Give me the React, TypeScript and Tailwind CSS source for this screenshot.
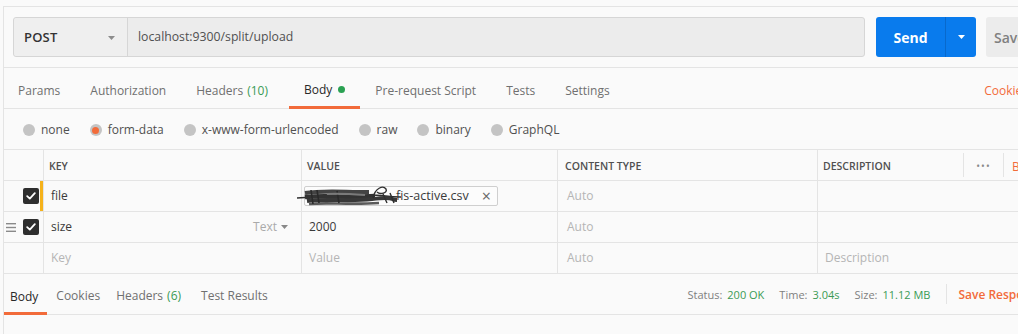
import React from "react";

const Caret = ({ className }: { className?: string }) => (
  <svg width="7" height="4" viewBox="0 0 7 4" className={className}>
    <path d="M0 0h7L3.5 4z" fill="currentColor" />
  </svg>
);

const Check = () => (
  <div className="w-[16px] h-[16px] rounded-[2px] bg-[#2e2e2e] flex items-center justify-center shrink-0">
    <svg width="10" height="8" viewBox="0 0 10 8">
      <path d="M1.2 4.2l2.6 2.4L8.8 1.2" stroke="white" strokeWidth="1.8" fill="none" strokeLinecap="round" strokeLinejoin="round" />
    </svg>
  </div>
);

const Hamburger = () => (
  <svg width="10" height="9" viewBox="0 0 10 9">
    <rect x="0" y="0" width="10" height="1.4" fill="#8a8a8a" />
    <rect x="0" y="3.8" width="10" height="1.4" fill="#8a8a8a" />
    <rect x="0" y="7.6" width="10" height="1.4" fill="#8a8a8a" />
  </svg>
);

const Radio = ({ on, label }: { on?: boolean; label: string }) => (
  <div className="flex items-center">
    <div className="w-[12px] h-[12px] rounded-full bg-[#c4c4c4] flex items-center justify-center">
      {on && <div className="w-[7px] h-[7px] rounded-full bg-[#f26b3a]" />}
    </div>
    <span className="ml-[6px] text-[12px] text-[#505050]">{label}</span>
  </div>
);

const Scribble = () => (
  <svg width="104" height="24" viewBox="0 0 104 24" className="shrink-0 -ml-[8px]">
    <path d="M0 14 C20 12 40 15 60 12 S85 13 104 13" stroke="#2f2f2f" strokeWidth="1.6" fill="none" />
    <path d="M8 9 C25 6 45 8 72 8" stroke="#444" strokeWidth="4" fill="none" />
    <path d="M8 13 C30 11 50 14 78 12" stroke="#333" strokeWidth="4.5" fill="none" />
    <path d="M10 17 C30 14 50 18 75 15 S92 16 100 16" stroke="#383838" strokeWidth="4" fill="none" />
    <path d="M12 20 C30 18 50 21 82 19" stroke="#5a5a5a" strokeWidth="2.6" fill="none" />
    <path d="M14 6 L16 20 M20 6 L22 19 M40 7 L42 19" stroke="#2a2a2a" strokeWidth="1.6" fill="none" />
    <path d="M76 14 C78 4 86 1 89 5 C91 9 83 11 80 8 M86 10 L90 19 M93 9 L97 19" stroke="#2f2f2f" strokeWidth="1.4" fill="none" />
    <path d="M30 10 C40 9 55 10 68 11" stroke="#7a7a7a" strokeWidth="2" fill="none" />
  </svg>
);

export default function App() {
  return (
    <div className="w-[1018px] h-[334px] overflow-hidden bg-[#fafafa] font-['Open_Sans',sans-serif]">
      <div className="w-[1066px] h-[334px] ml-[3px] mt-[6px] border-l border-t border-[#e4e4e4] flex flex-col">
        {/* Request bar */}
        <div className="flex items-stretch pl-[9px] pr-[13px] pt-[10px] pb-[10px] border-b border-[#e4e4e4]">
          <div className="flex flex-1 h-[40px] border border-[#d6d6d6] rounded-[3px] bg-[#ececec]">
            <div className="w-[114px] flex items-center justify-between pl-[10px] pr-[12px] pt-[1px] border-r border-[#d6d6d6] bg-[#efefef] rounded-l-[3px]">
              <span className="text-[13px] text-[#333] font-semibold tracking-[0.2px]">POST</span>
              <Caret className="text-[#8c8c8c]" />
            </div>
            <div className="flex-1 flex items-center pl-[10px] pt-[1px] text-[12.25px] text-[#505050]">localhost:9300/split/upload</div>
          </div>
          <div className="ml-[11px] w-[100px] h-[40px] flex rounded-[3px] bg-[#097bed] text-white">
            <div className="w-[69px] flex items-center justify-center pt-[1px] text-[14px] font-bold">Send</div>
            <div className="flex-1 flex items-center justify-center border-l border-[#0869cc]">
              <Caret className="text-white" />
            </div>
          </div>
          <div className="ml-[10px] w-[70px] h-[40px] flex items-center pl-[8px] pt-[1px] rounded-[3px] bg-[#ececec] text-[14px] font-semibold text-[#808080]">
            Save
          </div>
        </div>

        {/* Tabs */}
        <div className="flex items-stretch h-[41px] border-b border-[#e4e4e4] text-[12px]">
          <div className="pl-[14px] pr-[15px] flex items-center pt-[5px] text-[#707070]">Params</div>
          <div className="px-[15px] flex items-center pt-[5px] text-[#707070]">Authorization</div>
          <div className="px-[15px] flex items-center pt-[5px] text-[#707070]">
            Headers<span className="ml-[4px] text-[#3a9a55]">(10)</span>
          </div>
          <div className="px-[15px] flex items-center pt-[5px] text-[#282828] border-b-[3px] border-[#f26b3a] -mb-[1px] ml-[6px]">
            Body<span className="ml-[6px] w-[7px] h-[7px] rounded-full bg-[#2aa152] inline-block" />
          </div>
          <div className="pl-[15px] pr-[15px] flex items-center pt-[5px] text-[#707070]">Pre-request Script</div>
          <div className="px-[15px] flex items-center pt-[5px] text-[#707070]">Tests</div>
          <div className="px-[15px] flex items-center pt-[5px] text-[#707070]">Settings</div>
          <div className="ml-auto mr-[41px] flex items-center pt-[5px] text-[#f26b3a]">Cookies</div>
        </div>

        {/* Body type radios */}
        <div className="h-[40px] flex items-center pl-[19px] pt-[2px] gap-[20px]">
          <Radio label="none" />
          <Radio on label="form-data" />
          <Radio label="x-www-form-urlencoded" />
          <Radio label="raw" />
          <Radio label="binary" />
          <Radio label="GraphQL" />
        </div>

        {/* Table */}
        <div className="border-t border-[#e4e4e4] text-[12px]">
          {/* header */}
          <div className="flex h-[31px] border-b border-[#e4e4e4]">
            <div className="w-[40px] border-r border-[#e4e4e4]" />
            <div className="w-[258px] border-r border-[#e4e4e4] flex items-center pl-[5px] pt-[3px] text-[10.5px] font-semibold text-[#505050]">KEY</div>
            <div className="w-[256px] border-r border-[#e4e4e4] flex items-center pl-[5px] pt-[3px] text-[10.5px] font-semibold text-[#505050]">VALUE</div>
            <div className="w-[260px] border-r border-[#e4e4e4] flex items-center pl-[7px] pt-[3px] text-[10.5px] font-semibold text-[#505050]">CONTENT TYPE</div>
            <div className="w-[145px] flex items-center pl-[5px] pt-[3px] text-[10.5px] font-semibold text-[#505050]">DESCRIPTION</div>
            <div className="w-[1px] h-[24px] self-center bg-[#e4e4e4]" />
            <div className="w-[39px] flex items-center justify-center pt-[2px] text-[#888] text-[10px] tracking-[1px]">•••</div>
            <div className="w-[1px] h-[24px] self-center bg-[#e4e4e4]" />
            <div className="flex items-center pl-[8px] pt-[3px] text-[#f26b3a]">Bulk Edit</div>
          </div>
          {/* file row */}
          <div className="flex h-[31px] border-b border-[#e4e4e4]">
            <div className="w-[40px] border-r border-[#e4e4e4] flex items-center pl-[2px]">
              <div className="w-[10px]" />
              <div className="ml-[7px]"><Check /></div>
              <div className="ml-[1px] w-[3px] self-stretch bg-[#f5b21b]" />
            </div>
            <div className="w-[258px] border-r border-[#e4e4e4] flex items-center pl-[7px] text-[#3a3a3a]">file</div>
            <div className="w-[256px] border-r border-[#e4e4e4] flex items-center pl-[2px]">
              <div className="w-[194px] h-[20px] flex items-center border border-[#cfcfcf] rounded-[2px] bg-[#fcfcfc] text-[#3a3a3a]">
                <Scribble />
                <span className="-ml-[5px] text-[12.5px]">fis-active.csv</span>
                <span className="ml-auto mr-[6px] text-[16px] leading-none text-[#666]">×</span>
              </div>
            </div>
            <div className="w-[260px] border-r border-[#e4e4e4] flex items-center pl-[9px] text-[#b5b5b5]">Auto</div>
            <div className="flex-1" />
          </div>
          {/* size row */}
          <div className="flex h-[31px] border-b border-[#e4e4e4]">
            <div className="w-[40px] border-r border-[#e4e4e4] flex items-center pl-[2px]">
              <div className="w-[10px] flex"><Hamburger /></div>
              <div className="ml-[7px]"><Check /></div>
            </div>
            <div className="w-[258px] border-r border-[#e4e4e4] flex items-center pl-[7px] pr-[13px] text-[#3a3a3a]">
              size
              <span className="ml-auto text-[#aaaaaa]">Text</span>
              <Caret className="ml-[4px] text-[#888]" />
            </div>
            <div className="w-[256px] border-r border-[#e4e4e4] flex items-center pl-[7px] text-[#3a3a3a]">2000</div>
            <div className="w-[260px] border-r border-[#e4e4e4] flex items-center pl-[9px] text-[#b5b5b5]">Auto</div>
            <div className="flex-1" />
          </div>
          {/* empty row */}
          <div className="flex h-[31px] border-b border-[#e4e4e4]">
            <div className="w-[40px] border-r border-[#e4e4e4]" />
            <div className="w-[258px] border-r border-[#e4e4e4] flex items-center pl-[7px] text-[#b5b5b5]">Key</div>
            <div className="w-[256px] border-r border-[#e4e4e4] flex items-center pl-[7px] text-[#b5b5b5]">Value</div>
            <div className="w-[260px] border-r border-[#e4e4e4] flex items-center pl-[9px] text-[#b5b5b5]">Auto</div>
            <div className="flex-1 flex items-center pl-[7px] text-[#b5b5b5]">Description</div>
          </div>
        </div>

        {/* Response bar */}
        <div className="flex items-stretch h-[41px] border-b border-[#e4e4e4] text-[12px]">
          <div className="pl-[6px] pr-[9px] flex items-center pt-[7px] text-[#282828] border-b-[3px] border-[#f26b3a] -mb-[1px]">Body</div>
          <div className="pl-[9px] pr-[8px] flex items-center pt-[4px] text-[#707070]">Cookies</div>
          <div className="pl-[8px] pr-[9px] flex items-center pt-[4px] text-[#707070]">
            Headers<span className="ml-[4px] text-[#3a9a55]">(6)</span>
          </div>
          <div className="pl-[11px] flex items-center pt-[4px] text-[#707070]">Test Results</div>
          <div className="ml-auto flex items-center pt-[3px] text-[11px] text-[#808080]">
            <span>Status:</span><span className="ml-[5px] text-[#3a9a55]">200 OK</span>
            <span className="ml-[15px]">Time:</span><span className="ml-[5px] text-[#3a9a55]">3.04s</span>
            <span className="ml-[15px]">Size:</span><span className="ml-[5px] text-[#3a9a55]">11.12 MB</span>
          </div>
          <div className="ml-[16px] w-[1px] h-[20px] self-center bg-[#e4e4e4]" />
          <div className="ml-[11px] mr-[25px] flex items-center pt-[2px] text-[12px] font-semibold text-[#f26b3a]">Save Response</div>
        </div>
        <div className="flex-1" />
      </div>
    </div>
  );
}
